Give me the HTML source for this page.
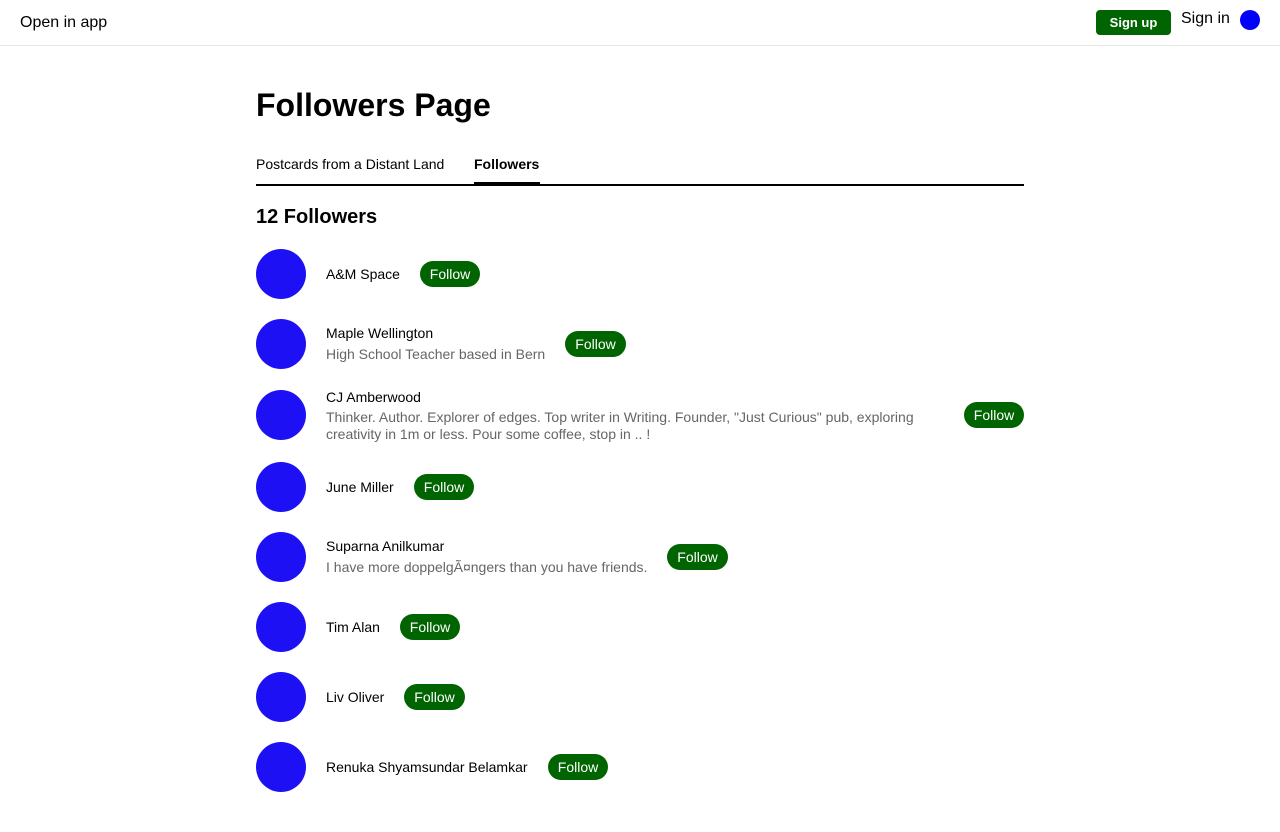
<!DOCTYPE html>
<html><head><meta charset="utf-8"><style>
*{margin:0;padding:0;box-sizing:border-box}
body{width:1280px;height:832px;background:#fff;font-family:"Liberation Sans",Arial,sans-serif;color:#000;position:relative;overflow:hidden}
.a{position:absolute}
.top{left:0;top:0;width:1280px;height:46px;border-bottom:1px solid #e8e8e8}
.av{position:absolute;left:256px;width:50px;height:50px;border-radius:50%;background:#1e10f5}
.nm{position:absolute;left:326px;font-size:14px;line-height:16px;white-space:nowrap}
.ds{position:absolute;left:326px;font-size:14px;line-height:17px;color:#666;white-space:nowrap}
.fb{position:absolute;height:26px;border-radius:13px;background:#006400;color:#fff;font-size:14px;line-height:26px;text-align:center}
</style></head><body>
<div class="a top"></div>
<div class="a" style="left:20px;top:13px;font-size:16px;line-height:19px">Open in app</div>
<div class="a" style="left:1096px;top:10px;width:75px;height:25px;background:#006400;border-radius:4px;color:#fff;font-size:13px;font-weight:bold;line-height:25px;text-align:center">Sign up</div>
<div class="a" style="left:1181px;top:10px;font-size:16px;line-height:18px">Sign in</div>
<div class="a" style="left:1240px;top:10px;width:20px;height:20px;border-radius:50%;background:#0000ff"></div>

<div class="a" style="left:256px;top:86px;font-size:32px;font-weight:bold;line-height:38px">Followers Page</div>
<div class="a" style="left:256px;top:156px;font-size:14px;line-height:16px">Postcards from a Distant Land</div>
<div class="a" style="left:474px;top:156px;font-size:14px;font-weight:bold;line-height:16px">Followers</div>
<div class="a" style="left:256px;top:184px;width:768px;height:2px;background:#000"></div>
<div class="a" style="left:474px;top:182px;width:66px;height:3px;background:#000"></div>
<div class="a" style="left:256px;top:206px;font-size:20px;font-weight:bold;line-height:23px">12 Followers</div>

<div class="av" style="top:249px"></div>
<div class="nm" style="top:266px">A&amp;M Space</div>
<div class="fb" style="left:420px;top:261px;width:60px">Follow</div>

<div class="av" style="top:319px"></div>
<div class="nm" style="top:325px">Maple Wellington</div>
<div class="ds" style="top:346px">High School Teacher based in Bern</div>
<div class="fb" style="left:565px;top:331px;width:61px">Follow</div>

<div class="av" style="top:390px"></div>
<div class="nm" style="top:389px">CJ Amberwood</div>
<div class="ds" style="top:409px">Thinker. Author. Explorer of edges. Top writer in Writing. Founder, "Just Curious" pub, exploring<br>creativity in 1m or less. Pour some coffee, stop in .. !</div>
<div class="fb" style="left:964px;top:402px;width:60px">Follow</div>

<div class="av" style="top:462px"></div>
<div class="nm" style="top:479px">June Miller</div>
<div class="fb" style="left:414px;top:474px;width:60px">Follow</div>

<div class="av" style="top:532px"></div>
<div class="nm" style="top:538px">Suparna Anilkumar</div>
<div class="ds" style="top:559px">I have more doppelgÃ¤ngers than you have friends.</div>
<div class="fb" style="left:667px;top:544px;width:61px">Follow</div>

<div class="av" style="top:602px"></div>
<div class="nm" style="top:619px">Tim Alan</div>
<div class="fb" style="left:400px;top:614px;width:60px">Follow</div>

<div class="av" style="top:672px"></div>
<div class="nm" style="top:689px">Liv Oliver</div>
<div class="fb" style="left:404px;top:684px;width:61px">Follow</div>

<div class="av" style="top:742px"></div>
<div class="nm" style="top:759px">Renuka Shyamsundar Belamkar</div>
<div class="fb" style="left:548px;top:754px;width:60px">Follow</div>
</body></html>
